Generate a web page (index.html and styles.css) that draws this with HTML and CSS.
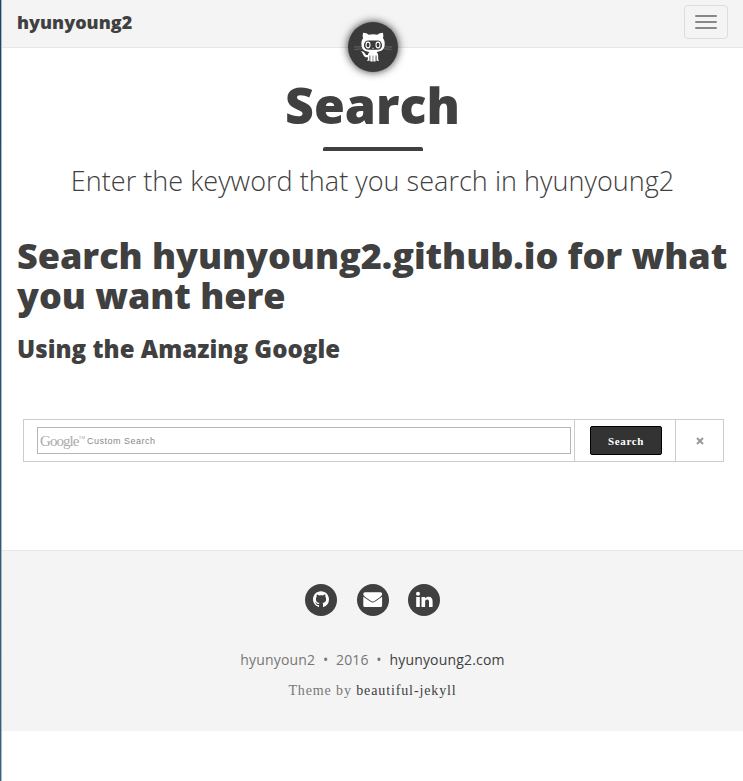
FILE: index.html
```html
<!DOCTYPE html>
<html lang="en">
<head>
<meta charset="utf-8">
<title>Search</title>
<link rel="stylesheet" href="styles.css">
</head>
<body>
<nav class="navbar">
  <a class="brand" href="#">hyunyoung2</a>
  <button class="toggle" aria-label="Toggle navigation"><span></span><span></span><span></span></button>
  <a class="avatar" href="#" aria-label="Home">
    <svg viewBox="0 0 50 50" width="50" height="50">
      <path d="M6 25 L17 24.7 M6.500 27.500 L17 26.500 M44 25 L33 24.700 M43.500 27.500 L33 26.500" stroke="#777" stroke-width=".7" fill="none"/>
      <path fill="#fff" d="M15.200 10.800 C17.400 10.700 19.300 11.700 20.700 12.700 C23.400 12 27 12 29.500 12.700 C31 11.500 33 10.800 34.800 10.800 C35.500 12.700 35.500 14.500 35 16.200 C36.600 18.100 37 20.500 36.600 23.500 C36.100 28 32.700 29.500 28.500 29.900 C30 31.300 30.200 32.600 30.200 34.500 V37.500 L31.300 38.700 H28.500 V33.500 H27.600 V39.400 H25.300 V33.500 H24.700 V39.400 H22.300 V33.500 H21.500 V38.700 H18.700 L19.900 37.500 V35.300 C16.700 35.800 15.600 33.600 14.700 31.400 C14.200 30.300 13.300 30 13 29.500 C15 28.900 16.300 30.500 17.100 31.800 C17.800 33 18.700 33.200 19.900 33 C20 31.800 20.400 30.700 21.500 29.900 C17.300 29.500 14 28 13.500 23.500 C13.200 20.500 13.500 18.100 15.100 16.200 C14.500 14.400 14.600 12.700 15.200 10.800Z"/>
      <rect x="16" y="18.500" width="18" height="9.200" rx="4.300" fill="#3a3a3a"/>
      <g fill="#3a3a3a" stroke="#fff" stroke-width="1.100"><ellipse cx="20" cy="23" rx="2" ry="2.900"/><ellipse cx="30" cy="23" rx="2" ry="2.900"/></g>
      <path d="M24.200 26.300 H25.800" stroke="#bbb"/>
    </svg>
  </a>
</nav>
<header class="intro">
  <h1>Search</h1>
  <hr>
  <p>Enter the keyword that you search in hyunyoung2</p>
</header>
<main>
  <h1>Search hyunyoung2.github.io for what<br>you want here</h1>
  <h3>Using the Amazing Google</h3>
  <form class="search">
    <div class="cell field"><div class="input"><span class="google">Google<sup>™</sup></span><span class="custom">Custom Search</span></div></div>
    <div class="cell action"><button type="button">Search</button></div>
    <div class="cell clear"><svg viewBox="0 0 8 8" width="8" height="8"><path d="M1 1 L7 7 M7 1 L1 7" stroke="#999" stroke-width="2"/></svg></div>
  </form>
</main>
<footer>
  <div class="social">
    <a href="#" aria-label="GitHub"><svg viewBox="0 0 32 32"><circle cx="16" cy="16" r="16"/><path class="mark" transform="translate(8 7.300)" d="M8 0C3.580 0 0 3.580 0 8c0 3.540 2.290 6.530 5.470 7.590.4.070.55-.17.55-.38 0-.19-.01-.82-.01-1.490-2.010.37-2.530-.49-2.690-.94-.09-.23-.48-.94-.82-1.130-.28-.15-.68-.52-.01-.53.63-.01 1.080.58 1.230.82.72 1.210 1.870.87 2.330.66.070-.52.28-.87.51-1.070-1.780-.2-3.640-.89-3.640-3.950 0-.87.31-1.590.82-2.150-.08-.2-.36-1.020.08-2.120 0 0 .67-.21 2.200.82.64-.18 1.320-.27 2-.27s1.360.09 2 .27c1.530-1.040 2.200-.82 2.200-.82.44 1.100.16 1.920.08 2.120.51.56.82 1.270.82 2.150 0 3.070-1.870 3.750-3.650 3.950.29.25.54.73.54 1.480 0 1.070-.01 1.930-.01 2.200 0 .21.15.46.55.38A8.010 8.010 0 0 0 16 8c0-4.420-3.580-8-8-8Z"/></svg></a>
    <a href="#" aria-label="Email"><svg viewBox="0 0 32 32"><circle cx="16" cy="16" r="16"/><path class="mark" d="M6.300 10V9.800Q6.300 8.200 8 8.200H23.500Q25.100 8.200 25.100 9.800V10C25.100 11.300 24 12.400 22.800 13.200L17.500 16.900C16.300 17.800 15.200 17.800 14 16.900L8.600 13.200C7.400 12.300 6.300 11.300 6.300 10Z M6.300 12.700L13.200 17.600C15 18.900 16.500 18.900 18.300 17.600L25.100 12.700V21.500Q25.100 23 23.500 23H8Q6.300 23 6.300 21.500Z"/></svg></a>
    <a href="#" aria-label="LinkedIn"><svg viewBox="0 0 32 32"><circle cx="16" cy="16" r="16"/><circle class="mark" cx="10" cy="9.700" r="2"/><path class="mark" d="M8.200 13H11.800V23H8.200Z M13.500 13H17.100V14.500C18 13.200 19.100 12.700 20.500 12.700C23.300 12.700 24.600 14.500 24.600 17.400V23H21V17.900C21 16.400 20.500 15.600 19.300 15.600C18 15.600 17.100 16.400 17.100 18V23H13.500Z"/></svg></a>
  </div>
  <p class="copyright">hyunyoun2 &nbsp;•&nbsp; 2016 &nbsp;•&nbsp; <a href="#">hyunyoung2.com</a></p>
  <p class="theme">Theme by <a href="#">beautiful-jekyll</a></p>
</footer>
</body>
</html>
```
FILE: styles.css
```css
* { box-sizing: border-box; }
html {
  background: linear-gradient(#1b4468, #3b6379) left top / 1px 781px no-repeat #fff;
}
body {
  margin: 0 0 0 1px;
  min-height: 781px;
  border-left: 1px solid #a9b8c2;
  color: #404040;
  font-family: "Open Sans", sans-serif;
}
a { color: #404040; text-decoration: none; }
h1, h3, p { margin: 0; }
.navbar {
  position: relative;
  display: flex;
  justify-content: space-between;
  align-items: flex-start;
  height: 48px;
  padding: 5px 15px 0;
  background: #f4f4f4;
  border-bottom: 1px solid #e6e6e6;
}
.brand { font-size: 18px; font-weight: 800; line-height: 34px; }
.toggle {
  display: flex;
  flex-direction: column;
  align-items: center;
  justify-content: center;
  gap: 4px;
  width: 44px;
  height: 34px;
  padding: 0;
  background: transparent;
  border: 1px solid #ddd;
  border-radius: 4px;
}
.toggle span { width: 22px; height: 2px; background: #888; border-radius: 1px; }
.avatar {
  position: absolute;
  left: 346px;
  top: 22px;
  width: 50px;
  height: 50px;
  border-radius: 50%;
  background: #3a3a3a;
  box-shadow: 0 0 8px rgba(0, 0, 0, .8);
}
.avatar svg { display: block; }
.intro { padding-top: 30px; text-align: center; }
.intro h1 { font-size: 50px; font-weight: 800; line-height: 55px; }
.intro hr { width: 100px; height: 4px; margin: 14px auto 0; border: 0; border-radius: 2px 2px 0 0; background: #404040; }
.intro p { margin-top: 15px; font-size: 27px; font-weight: 300; line-height: 30px; letter-spacing: .04px; }
main { padding: 40px 15px 0; white-space: nowrap; }
main h1 { font-size: 36px; font-weight: 800; line-height: 40px; letter-spacing: -.045px; }
main h3 { margin-top: 20px; font-size: 24px; font-weight: 800; line-height: 26px; letter-spacing: .04px; }
.search { display: flex; width: 701px; height: 43px; margin: 57px 0 0 6px; border: 1px solid #ccc; }
.cell { display: flex; align-items: center; }
.field { width: 550px; padding-left: 13px; }
.input { display: flex; align-items: center; width: 534px; height: 27px; padding-left: 2px; border: 1px solid #b5b5b5; color: #999; }
.google { width: 47px; font: 15px/20px "Liberation Serif", serif; letter-spacing: -.95px; color: #aaa; }
.google sup { font-size: 7px; line-height: 0; vertical-align: 5px; letter-spacing: 0; }
.custom { font: 9px/20px "Liberation Sans", sans-serif; letter-spacing: .5px; color: #888; }
.action { width: 101px; padding-left: 15px; border-left: 1px solid #ccc; }
.action button {
  width: 72px;
  height: 29px;
  padding: 0;
  background: #333;
  border: 1px solid #000;
  border-radius: 2px;
  color: #fff;
  font: bold 11px "Liberation Serif", serif;
  letter-spacing: .6px;
}
.clear { flex: 1; justify-content: center; border-left: 1px solid #ccc; }
.clear svg { display: block; }
footer { height: 181px; margin-top: 88px; padding-top: 33px; border-top: 1px solid #e6e6e6; background: #f4f4f4; text-align: center; color: #777; }
.social { display: flex; justify-content: center; gap: 19.500px; }
.social svg { display: block; width: 32px; height: 32px; fill: #404040; }
.social .mark { fill: #fff; }
.copyright { margin-top: 34px; font-size: 14px; line-height: 20px; letter-spacing: .18px; }
.theme { margin-top: 10px; font: 14px/21px "Liberation Serif", serif; letter-spacing: .88px; }
```
